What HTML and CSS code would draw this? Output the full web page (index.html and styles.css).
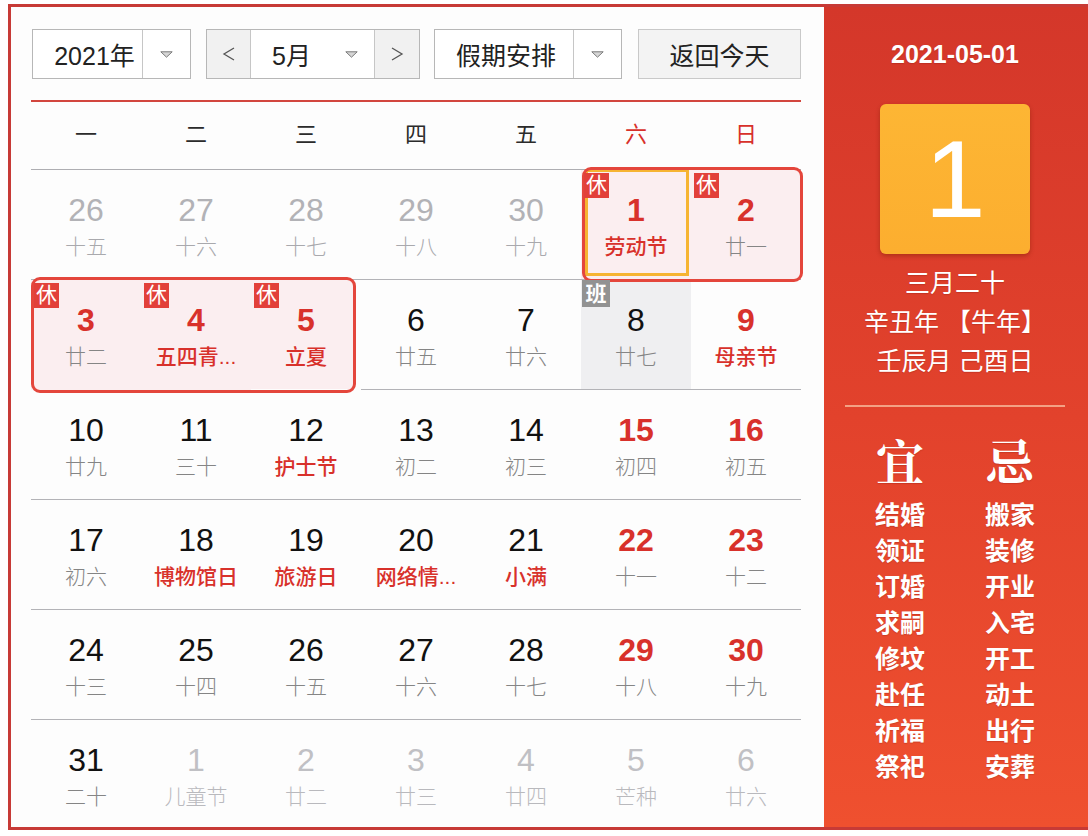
FILE: index.html
```html
<!DOCTYPE html>
<html lang="zh-CN">
<head>
<meta charset="utf-8">
<title>万年历</title>
<link rel="stylesheet" href="styles.css">
</head>
<body>
<div class="frame">
  <div class="main">
    <div class="toolbar">
      <div class="sel year">
        <span class="sel-text">2021年</span>
        <span class="sel-arrow"><svg width="13" height="7" viewBox="0 0 13 7"><path d="M0.8 0.8 H12.2 L6.5 6.2 Z" fill="#d6d6d6" stroke="#7a7a7a" stroke-width="1"/></svg></span>
      </div>
      <div class="sel month">
        <span class="nav nav-prev"><svg width="16" height="16" viewBox="0 0 16 16"><polyline points="13,2 3,8 13,14" fill="none" stroke="#555" stroke-width="1.3"/></svg></span>
        <span class="month-mid">
          <span class="month-text">5月</span>
          <svg class="month-arrow" width="13" height="7" viewBox="0 0 13 7"><path d="M0.8 0.8 H12.2 L6.5 6.2 Z" fill="#d6d6d6" stroke="#7a7a7a" stroke-width="1"/></svg>
        </span>
        <span class="nav nav-next"><svg width="16" height="16" viewBox="0 0 16 16"><polyline points="3,2 13,8 3,14" fill="none" stroke="#555" stroke-width="1.3"/></svg></span>
      </div>
      <div class="sel holiday">
        <span class="sel-text">假期安排</span>
        <span class="sel-arrow"><svg width="13" height="7" viewBox="0 0 13 7"><path d="M0.8 0.8 H12.2 L6.5 6.2 Z" fill="#d6d6d6" stroke="#7a7a7a" stroke-width="1"/></svg></span>
      </div>
      <div class="today">返回今天</div>
    </div>
    <div class="rule"></div>
    <div class="weekdays">
      <span>一</span><span>二</span><span>三</span><span>四</span><span>五</span><span class="wk-red">六</span><span class="wk-red">日</span>
    </div>
    <div class="grid">
      <div class="hol hol-a"></div>
      <div class="hol hol-b"></div>

      <div class="cell other"><span class="num">26</span><span class="lun">十五</span></div>
      <div class="cell other"><span class="num">27</span><span class="lun">十六</span></div>
      <div class="cell other"><span class="num">28</span><span class="lun">十七</span></div>
      <div class="cell other"><span class="num">29</span><span class="lun">十八</span></div>
      <div class="cell other"><span class="num">30</span><span class="lun">十九</span></div>
      <div class="cell rest selected"><span class="badge">休</span><span class="num red">1</span><span class="lun fest">劳动节</span></div>
      <div class="cell rest"><span class="badge">休</span><span class="num red">2</span><span class="lun">廿一</span></div>

      <div class="cell rest no-line"><span class="badge">休</span><span class="num red">3</span><span class="lun">廿二</span></div>
      <div class="cell rest no-line"><span class="badge">休</span><span class="num red">4</span><span class="lun fest">五四青...</span></div>
      <div class="cell rest rest-cut no-line"><span class="badge">休</span><span class="num red">5</span><span class="lun fest">立夏</span></div>
      <div class="cell"><span class="num">6</span><span class="lun">廿五</span></div>
      <div class="cell"><span class="num">7</span><span class="lun">廿六</span></div>
      <div class="cell work"><span class="badge badge-work">班</span><span class="num">8</span><span class="lun">廿七</span></div>
      <div class="cell"><span class="num red">9</span><span class="lun fest">母亲节</span></div>

      <div class="cell"><span class="num">10</span><span class="lun">廿九</span></div>
      <div class="cell"><span class="num">11</span><span class="lun">三十</span></div>
      <div class="cell"><span class="num">12</span><span class="lun fest">护士节</span></div>
      <div class="cell"><span class="num">13</span><span class="lun">初二</span></div>
      <div class="cell"><span class="num">14</span><span class="lun">初三</span></div>
      <div class="cell"><span class="num red">15</span><span class="lun">初四</span></div>
      <div class="cell"><span class="num red">16</span><span class="lun">初五</span></div>

      <div class="cell"><span class="num">17</span><span class="lun">初六</span></div>
      <div class="cell"><span class="num">18</span><span class="lun fest">博物馆日</span></div>
      <div class="cell"><span class="num">19</span><span class="lun fest">旅游日</span></div>
      <div class="cell"><span class="num">20</span><span class="lun fest">网络情...</span></div>
      <div class="cell"><span class="num">21</span><span class="lun fest">小满</span></div>
      <div class="cell"><span class="num red">22</span><span class="lun">十一</span></div>
      <div class="cell"><span class="num red">23</span><span class="lun">十二</span></div>

      <div class="cell"><span class="num">24</span><span class="lun">十三</span></div>
      <div class="cell"><span class="num">25</span><span class="lun">十四</span></div>
      <div class="cell"><span class="num">26</span><span class="lun">十五</span></div>
      <div class="cell"><span class="num">27</span><span class="lun">十六</span></div>
      <div class="cell"><span class="num">28</span><span class="lun">十七</span></div>
      <div class="cell"><span class="num red">29</span><span class="lun">十八</span></div>
      <div class="cell"><span class="num red">30</span><span class="lun">十九</span></div>

      <div class="cell last"><span class="num">31</span><span class="lun">二十</span></div>
      <div class="cell last next"><span class="num">1</span><span class="lun">儿童节</span></div>
      <div class="cell last next"><span class="num">2</span><span class="lun">廿二</span></div>
      <div class="cell last next"><span class="num">3</span><span class="lun">廿三</span></div>
      <div class="cell last next"><span class="num">4</span><span class="lun">廿四</span></div>
      <div class="cell last next"><span class="num">5</span><span class="lun">芒种</span></div>
      <div class="cell last next"><span class="num">6</span><span class="lun">廿六</span></div>
    </div>
  </div>

  <aside class="side">
    <div class="side-date">2021-05-01</div>
    <div class="big-day">1</div>
    <div class="lunar-info">
      <div>三月二十</div>
      <div>辛丑年 【牛年】</div>
      <div>壬辰月 己酉日</div>
    </div>
    <div class="side-rule"></div>
    <div class="yiji">
      <div class="yiji-col">
        <div class="yiji-head">宜</div>
        <div class="yiji-item">结婚</div>
        <div class="yiji-item">领证</div>
        <div class="yiji-item">订婚</div>
        <div class="yiji-item">求嗣</div>
        <div class="yiji-item">修坟</div>
        <div class="yiji-item">赴任</div>
        <div class="yiji-item">祈福</div>
        <div class="yiji-item">祭祀</div>
      </div>
      <div class="yiji-col">
        <div class="yiji-head">忌</div>
        <div class="yiji-item">搬家</div>
        <div class="yiji-item">装修</div>
        <div class="yiji-item">开业</div>
        <div class="yiji-item">入宅</div>
        <div class="yiji-item">开工</div>
        <div class="yiji-item">动土</div>
        <div class="yiji-item">出行</div>
        <div class="yiji-item">安葬</div>
      </div>
    </div>
  </aside>
</div>
</body>
</html>
```

FILE: styles.css
```css
html, body {
  margin: 0;
  background: #ffffff;
}
body {
  padding: 4px 0 0 8px;
  font-family: "Liberation Sans", "Noto Sans CJK SC", sans-serif;
  overflow: hidden;
}
.frame {
  display: flex;
  width: 1080px;
  height: 826px;
  box-sizing: border-box;
  border: 3px solid #c73a36;
  border-right: 0;
}
.main {
  width: 813px;
  flex: none;
  background: #fdfdfd;
  box-sizing: border-box;
  padding: 22px 0 0 20px;
}

/* toolbar */
.toolbar {
  display: flex;
  height: 50px;
  margin-left: 1px;
}
.sel {
  display: flex;
  height: 50px;
  box-sizing: border-box;
  border: 1px solid #b7b7b7;
  background: #ffffff;
}
.sel-text {
  display: flex;
  align-items: center;
  justify-content: center;
  font-size: 25px;
  color: #222;
  border-right: 1px solid #c6c6c6;
}
.sel-arrow {
  flex: 1;
  display: flex;
  align-items: center;
  justify-content: center;
}
.year {
  width: 159px;
}
.year .sel-text {
  width: 110px;
  box-sizing: border-box;
  padding-left: 14px;
}
.month {
  width: 214px;
  margin-left: 15px;
}
.nav {
  width: 43px;
  display: flex;
  align-items: center;
  justify-content: center;
  background: #f1f1f1;
}
.nav-prev {
  border-right: 1px solid #c6c6c6;
}
.nav-next {
  border-left: 1px solid #c6c6c6;
  flex: 1;
}
.month-mid {
  width: 123px;
  display: flex;
  align-items: center;
  box-sizing: border-box;
  padding-left: 21px;
}
.month-text {
  font-size: 25px;
  color: #222;
}
.month-arrow {
  margin-left: 34px;
}
.holiday {
  width: 188px;
  margin-left: 14px;
}
.holiday .sel-text {
  width: 139px;
  box-sizing: border-box;
  padding-left: 4px;
}
.today {
  width: 163px;
  height: 50px;
  margin-left: 16px;
  box-sizing: border-box;
  border: 1px solid #c9c9c9;
  background: #f3f3f3;
  display: flex;
  align-items: center;
  justify-content: center;
  font-size: 25px;
  color: #222;
}

.rule {
  width: 770px;
  height: 2px;
  margin-top: 21px;
  background: #d2463e;
}

/* weekdays */
.weekdays {
  width: 770px;
  height: 68px;
  box-sizing: border-box;
  border-bottom: 1px solid #aeaeb2;
  display: grid;
  grid-template-columns: repeat(7, 110px);
  align-items: center;
  padding-bottom: 8px;
  font-size: 22px;
  color: #2b2b2b;
}
.weekdays span {
  text-align: center;
}
.weekdays .wk-red {
  color: #d8312b;
}

/* grid */
.grid {
  position: relative;
  width: 770px;
  display: grid;
  grid-template-columns: repeat(7, 110px);
}
.cell {
  position: relative;
  height: 110px;
  box-sizing: border-box;
  border-bottom: 1px solid #b3b3b7;
  display: flex;
  flex-direction: column;
  align-items: center;
  padding-top: 22px;
}
.cell.last {
  border-bottom: 0;
}
.num {
  font-size: 32px;
  line-height: 36px;
  color: #111;
}
.num.red {
  color: #d8312b;
  font-weight: 700;
}
.lun {
  font-size: 21px;
  line-height: 26px;
  margin-top: 6px;
  color: #858585;
  font-weight: 300;
  white-space: nowrap;
}
.lun.fest {
  color: #d8312b;
  font-weight: 500;
}
.other .num {
  color: #b2b2b6;
}
.other .lun {
  color: #a9a9ad;
}
.next .num {
  color: #c0c0c4;
}
.next .lun {
  color: #b9b9bd;
}

.rest {
  background: #fbeef0;
}
.rest-cut {
  background: linear-gradient(#fbeef0, #fbeef0) no-repeat 0 0 / 104px 100%;
}
.no-line {
  border-bottom-color: transparent;
}
.work {
  background: #efeff1;
}
.selected::after {
  content: "";
  position: absolute;
  top: -1px;
  left: 4px;
  right: 2px;
  bottom: 3px;
  border: 3px solid #f6b432;
  z-index: 1;
}

.hol {
  position: absolute;
  box-sizing: border-box;
  border: 3px solid #e4463c;
  border-radius: 9px;
  z-index: 2;
}
.hol-a {
  left: 551px;
  top: -3px;
  width: 221px;
  height: 115px;
}
.hol-b {
  left: 0;
  top: 107px;
  width: 325px;
  height: 116px;
}

.badge {
  position: absolute;
  top: 3px;
  left: 3px;
  width: 25px;
  height: 25px;
  background: #e2403a;
  color: #fff;
  font-size: 21px;
  line-height: 24px;
  text-align: center;
  z-index: 3;
}
.badge-work {
  top: 0;
  left: 1px;
  width: 28px;
  height: 27px;
  line-height: 27px;
  background: #929292;
  font-weight: 700;
}

/* side panel */
.side {
  flex: 1;
  box-sizing: border-box;
  padding: 32px 23px 0 21px;
  background: linear-gradient(180deg, #d4372a 0%, #e2422c 50%, #ef502f 100%);
  color: #fff;
  display: flex;
  flex-direction: column;
  align-items: center;
  text-shadow: 0 1px 1px rgba(120, 20, 10, 0.25);
}
.side-date {
  font-size: 25px;
  line-height: 30px;
  font-weight: 700;
}
.big-day {
  width: 150px;
  height: 150px;
  margin-top: 35px;
  border-radius: 6px;
  background: linear-gradient(180deg, #fdb634, #fcae2f);
  box-shadow: 0 2px 4px rgba(120, 30, 0, 0.45);
  display: flex;
  align-items: center;
  justify-content: center;
  font-size: 110px;
  line-height: 1;
  text-shadow: none;
}
.lunar-info {
  margin-top: 10px;
  font-size: 25px;
  line-height: 39px;
  text-align: center;
}
.side-rule {
  align-self: stretch;
  height: 2px;
  margin-top: 24px;
  background: #f3a184;
}
.yiji {
  align-self: stretch;
  display: grid;
  grid-template-columns: 110px 110px;
  margin-top: 25px;
}
.yiji-col {
  display: flex;
  flex-direction: column;
  align-items: center;
}
.yiji-head {
  font-family: "Noto Serif CJK SC", "Noto Sans CJK SC", serif;
  font-size: 48px;
  line-height: 56px;
  font-weight: 700;
  margin-bottom: 9px;
}
.yiji-item {
  font-size: 25px;
  line-height: 36px;
  font-weight: 700;
}
```
